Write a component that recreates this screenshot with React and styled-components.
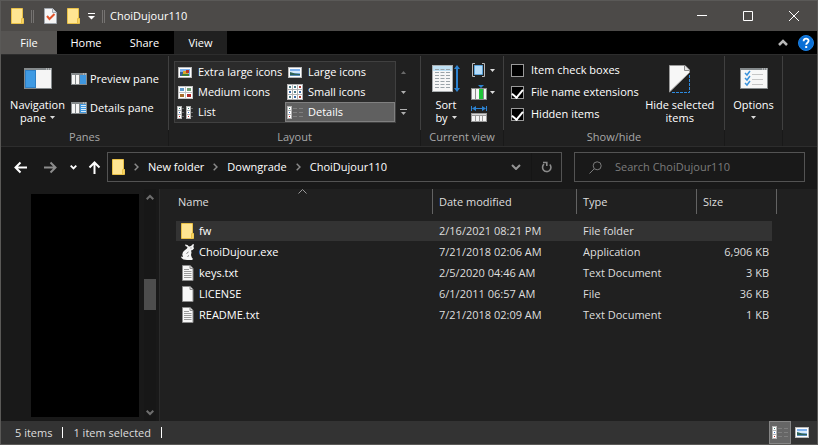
import React from 'react';
import styled, { createGlobalStyle, css } from 'styled-components';

const columns = ['Name', 'Date modified', 'Type', 'Size'];

const files = [
    { icon: 'folder', name: 'fw', date: '2/16/2021 08:21 PM', type: 'File folder', size: '', selected: true },
    { icon: 'mouse', name: 'ChoiDujour.exe', date: '7/21/2018 02:06 AM', type: 'Application', size: '6,906 KB' },
    { icon: 'text', name: 'keys.txt', date: '2/5/2020 04:46 AM', type: 'Text Document', size: '3 KB' },
    { icon: 'blank', name: 'LICENSE', date: '6/1/2011 06:57 AM', type: 'File', size: '36 KB' },
    { icon: 'text', name: 'README.txt', date: '7/21/2018 02:09 AM', type: 'Text Document', size: '1 KB' },
];

const path = ['New folder', 'Downgrade', 'ChoiDujour110'];

/* ---------- icons ---------- */

const Svg = ({ w, h, children }) => (
    <svg width={w} height={h} viewBox={`0 0 ${w} ${h}`} fill="none" aria-hidden="true">{children}</svg>
);

const FolderIcon = () => (
    <Svg w={13} h={16}>
        <path d="M.5 .5h11v10h1v5h-12z" fill="#ffe592" stroke="#e9c148" />
        <path d="M10.500 15v-4.500h2" stroke="#e9c148" />
        <path d="M11 11h1.500v4h-1.500z" fill="#f8d462" />
    </Svg>
);

const CheckedPageIcon = () => (
    <Svg w={13} h={16}>
        <path d="M.5 .5h8l4 4v11h-12z" fill="#f6f6f6" stroke="#a3a9b0" />
        <path d="M8.500 .5v4h4" fill="#dde2e8" stroke="#a3a9b0" />
        <path d="M3 8l2.500 3 5-5" stroke="#e0532a" strokeWidth="2" />
    </Svg>
);

const PageIcon = ({ lines }) => (
    <Svg w={13} h={16}>
        <path d="M1.500 .5h7.500l3 3v12h-10.500z" fill="#f7f7f7" stroke="#8d8d8d" />
        <path d="M9 .5v3h3" fill="#ddd" stroke="#8d8d8d" />
        {lines && <path d="M3 4.500h5M3 6.500h7.500M3 8.500h7.500M3 10.500h7.500M3 12.500h7.500" stroke="#9a9a9a" />}
    </Svg>
);

const MouseIcon = () => (
    <Svg w={13} h={16}>
        <path d="M4 0.500l2.500 .5 1.500 1.500L10 2l2-2 1 .5-.6 2.200L13 4.500 11.500 6 10 6.500l.5 2L10 11l.8 2.500L12 15l-1 1H6l-3.500-.5L.5 14 0 12.500 2 13l-.7-2.500L2 8 4 6l2-1.500L6.500 3 4.500 2z" fill="#f4f4f4" />
        <path d="M9.500 4h1M7.500 8l-2 1.500M6.500 12.500l1.500-1" stroke="#777" />
    </Svg>
);

const fileIcons = {
    folder: <FolderIcon />,
    mouse: <MouseIcon />,
    text: <PageIcon lines />,
    blank: <PageIcon />,
};

const NavPaneIcon = () => (
    <Svg w={28} h={21}>
        <path fill="#858a8c" d="M0 0h28v21H0z" />
        <path fill="#f5f5f5" d="M1 2h26v18H1z" />
        <path fill="#2f7fc4" d="M1 2h11v18H1z" />
        <path fill="#3f9ae3" d="M2 3h9v16H2z" />
        <path d="M22 1h1m1 0h1m1 0h1" stroke="#ddd" />
    </Svg>
);

const PaneIcon = ({ details }) => (
    <Svg w={16} h={12}>
        <path fill="#858a8c" d="M0 0h16v12H0z" />
        <path fill="#f5f5f5" d="M1 2h3v9H1zM5 2h3v9H5z" />
        <path fill="#3f97df" d="M9 2h6v9H9z" />
        <path d="M12 1h1m1 0h1" stroke="#ddd" />
        {details && <path d="M10 3.500h5M10 5.500h5M10 7.500h5M10 9.500h5" stroke="#d9ecfb" />}
    </Svg>
);

const PictureIcon = ({ colorful }) => (
    <Svg w={14} h={11}>
        <path fill="#b8b8b8" d="M0 0h14v11H0z" />
        <path fill="#fff" d="M1 1h12v9H1z" />
        <path fill="#7fb2ee" d="M2 2h10v7H2z" />
        {colorful ? (
            <>
                <path fill="#355f9c" d="M2 5h4v4H2z" />
                <path fill="#d9a82c" d="M5 4h5v4H5z" />
                <path fill="#b8342a" d="M8 3h3v3H8z" />
                <path fill="#3f7d3c" d="M4 7h7v2H4z" />
            </>
        ) : (
            <>
                <path fill="#d7e9fa" d="M2 4h10v2H2z" />
                <path fill="#2f6357" d="M2 5l5 1.500 5 .5v1H2z" />
                <path fill="#5a8bb8" d="M2 8h10v1H2z" />
            </>
        )}
    </Svg>
);

const MediumIcon = () => (
    <Svg w={15} h={13}>
        <path fill="#c4c4c4" d="M0 0h15v13H0z" />
        <path fill="#fff" d="M1 1h6v5H1zM8 1h6v5H8zM1 7h6v5H1zM8 7h6v5H8z" />
        <path fill="#5e98c9" d="M2 2h4v3H2z" />
        <path fill="#6f9e73" d="M9 2h4v3H9z" />
        <path fill="#a86d2b" d="M2 8h4v3H2z" />
        <path fill="#b02a2a" d="M9 8h4v3H9z" />
    </Svg>
);

const SmallIcon = () => (
    <Svg w={16} h={16}>
        <path fill="#b4b4b4" d="M0 0h16v16H0z" />
        <path fill="#fff" d="M1 1h4v4H1zM6 1h4v4H6zM11 1h4v4h-4zM1 6h4v4H1zM6 6h4v4H6zM11 6h4v4h-4zM1 11h4v4H1zM6 11h4v4H6zM11 11h4v4h-4z" />
        <path fill="#4a7a86" d="M2 2h2v2H2zM7 2h2v2H7zM7 7h2v2H7zM2 12h2v2H2z" />
        <path fill="#a53a34" d="M12 2h2v2h-2zM12 12h2v2h-2z" />
        <path fill="#3b6aa5" d="M2 7h2v2H2zM12 7h2v2h-2zM7 12h2v2H7z" />
    </Svg>
);

const Strip = ({ x }) => (
    <g transform={`translate(${x} 0)`}>
        <path fill="#b4b4b4" d="M0 0h5v13H0z" />
        <path fill="#fff" d="M1 1h3v3H1zM1 5h3v3H1zM1 9h3v3H1z" />
        <path fill="#3a7c6f" d="M2 2h1v1H2z" />
        <path fill="#3f74c4" d="M2 6h1v1H2z" />
        <path fill="#c22626" d="M2 10h1v1H2z" />
    </g>
);

const ListIcon = () => (
    <Svg w={16} h={13}>
        <Strip x={0} />
        <Strip x={9} />
        <path d="M5 2.500h2M5 6.500h2M5 10.500h2M14 2.500h2M14 6.500h2M14 10.500h2" stroke="#6b6b6b" />
    </Svg>
);

const DetailsIcon = () => (
    <Svg w={16} h={13}>
        <Strip x={0} />
        <path d="M6 2.500h4M12 2.500h4M6 6.500h4M12 6.500h4M6 10.500h4M12 10.500h4" stroke="#7f7f7f" />
    </Svg>
);

const SortIcon = () => (
    <Svg w={28} h={27}>
        <path fill="#a9adaf" d="M0 0h21v27H0z" />
        <path fill="#f6f6f6" d="M1 1h19v25H1z" />
        <path fill="#bfe0f3" d="M1 1h19v5H1z" />
        <path d="M3 4.500h15M3 7.500h15M3 10.500h15M3 13.500h15M3 16.500h15M3 19.500h15M3 22.500h15" stroke="#9aa3a8" strokeDasharray="4 1.500" />
        <path d="M25 2v23" stroke="#2d83d1" strokeWidth="2" />
        <path d="M25 0l3 4h-6zM25 27l3-4h-6z" fill="#2d83d1" />
    </Svg>
);

const GroupByIcon = () => (
    <Svg w={16} h={14}>
        <path d="M4 .5H1.500v13H4M11 .5h2.500v13H11" stroke="#b9b9b9" />
        <path fill="#b6dcf8" stroke="#5da6dd" d="M3.500 2.500h8v9h-8z" />
    </Svg>
);

const AddColumnsIcon = () => (
    <Svg w={16} h={15}>
        <path d="M7 0h6l-3 3z" fill="#2d83d1" />
        <path fill="#8c8c8c" d="M0 3h16v12H0z" />
        <path fill="#f5f5f5" d="M1 4h3v10H1zM5 4h3v10H5zM13 4h2v10h-2z" />
        <path fill="#20c43a" d="M8 4h4v10H8z" />
    </Svg>
);

const SizeColumnsIcon = () => (
    <Svg w={16} h={16}>
        <path d="M.5 0v5M15.500 0v5M2 2.500h12" stroke="#2d83d1" />
        <path d="M5 0v5L1 2.500zM11 0v5l4-2.500z" fill="#2d83d1" />
        <path fill="#9a9a9a" d="M0 7h16v9H0z" />
        <path fill="#d8d8d8" d="M1 8h14v1H1z" />
        <path fill="#f5f5f5" d="M1 10h3v5H1zM5 10h3v5H5zM9 10h2v5H9zM12 10h3v5h-3z" />
    </Svg>
);

const HideIcon = () => (
    <Svg w={21} h={28}>
        <path d="M.5 27V.5H16L20.500 5v2.500z" fill="#f7f7f7" stroke="#9b9b9b" />
        <path d="M15.500 .5v5h5" fill="#e6e6e6" stroke="#8b8b8b" />
        <path d="M20.500 10v17.500H3" stroke="#2d8be0" strokeDasharray="3 1" />
    </Svg>
);

const OptionsIcon = () => (
    <Svg w={28} h={21}>
        <path fill="#858a8c" d="M0 0h28v21H0z" />
        <path fill="#f7f7f7" d="M1 2h26v18H1z" />
        <path d="M22 1h1m1 0h1m1 0h1" stroke="#ddd" />
        <path d="M12 6.500h11M12 11.500h11M12 16.500h11" stroke="#c6c6c6" />
        <path d="M5 5l2 2 3-4M5 10l2 2 3-4M5 15l2 2 3-4" stroke="#3a93dd" strokeWidth="1.500" />
    </Svg>
);

const Caret = () => (
    <Svg w={5} h={3}><path d="M0 0h5L2.500 3z" fill="#dcdcdc" /></Svg>
);

const Chevron = () => (
    <Svg w={5} h={8}><path d="M.7 .7L4 4 .7 7.300" stroke="#8a8a8a" strokeWidth="1.500" /></Svg>
);

const ArrowIcon = ({ turn = 0, color = '#fff' }) => (
    <Svg w={13} h={13}>
        <path transform={`rotate(${turn} 6.500 6.500)`} d="M13 6.500H1.500M6.500 1.500l-5 5 5 5" stroke={color} strokeWidth="2" />
    </Svg>
);

/* ---------- styles ---------- */

const GlobalStyle = createGlobalStyle`
    * {
        box-sizing: border-box;
    }

    body {
        margin: 0;
        background: #202020;
        color: #fff;
        font: 11px/16px 'Open Sans', 'Noto Sans', sans-serif;
    }

    button,
    input {
        margin: 0;
        padding: 0;
        border: 0;
        background: none;
        color: inherit;
        font: inherit;
    }

    svg {
        display: block;
        flex-shrink: 0;
    }
`;

const Window = styled.div`
    display: flex;
    flex-direction: column;
    min-height: 100vh;
    border: 1px solid #5a5957;
    background: #191919;
`;

const TitleBar = styled.header`
    display: flex;
    align-items: center;
    height: 30px;
    padding-left: 10px;
    background: #4c4a48;
`;

const QuickAccess = styled.div`
    display: flex;
    align-items: center;
    gap: 7px;
`;

const Grip = styled.span`
    width: 3px;
    height: 13px;
    border: solid #757371;
    border-width: 0 1px;
`;

const QuickButton = styled.button`
    display: flex;
    justify-content: center;
    width: ${props => props.$width}px;
`;

const Title = styled.h1`
    flex: 1;
    margin: 0 0 0 5px;
    font-size: 11px;
    font-weight: 400;
`;

const CaptionButton = styled.button`
    display: flex;
    align-items: center;
    justify-content: center;
    width: 46px;
    height: 30px;
`;

const Tabs = styled.nav`
    display: flex;
    align-items: center;
    height: 23px;
    background: #000;
`;

const tabKinds = {
    file: css`
        background: #565452;
    `,
    active: css`
        background: #202020;
    `,
};

const Tab = styled.button`
    width: ${props => props.$width}px;
    height: 23px;
    ${props => tabKinds[props.$kind]}
`;

const TabTools = styled.div`
    display: flex;
    align-items: center;
    gap: 10px;
    margin-left: auto;
    padding-right: 3px;
`;

const Ribbon = styled.section`
    display: flex;
    height: 93px;
    border: solid #2d2d2d;
    border-width: 1px 0;
    background: #202020;
`;

const Group = styled.div`
    display: flex;
    flex-direction: column;
    width: ${props => props.$width}px;
    border-right: 1px solid #404040;
    border-image: linear-gradient(#202020 2px, #404040 2px, #404040 74px, #191919 74px) 1;
    border-width: 0 1px 0 0;
`;

const GroupBody = styled.div`
    display: flex;
    height: 74px;
    padding: 0 ${props => props.$pad || 4}px;
`;

const GroupLabel = styled.div`
    color: #a8a8a8;
    text-align: center;
`;

const BigButton = styled.button`
    display: flex;
    flex-direction: column;
    flex-shrink: 0;
    align-items: center;
    width: ${props => props.$width}px;
    padding-top: 8px;
    line-height: 13px;
    white-space: nowrap;
`;

const BigIcon = styled.span`
    display: flex;
    align-items: center;
    height: 31px;
    margin-bottom: 4px;
`;

const ButtonLine = styled.span`
    display: flex;
    align-items: center;
    gap: 4px;
    min-height: 13px;
`;

const Stack = styled.div`
    display: flex;
    flex-direction: column;
    margin-left: ${props => props.$gap || 0}px;
    padding-top: ${props => props.$top}px;
`;

const SmallButton = styled.button`
    display: flex;
    align-items: center;
    gap: 3px;
    height: ${props => props.$height}px;
    white-space: nowrap;
`;

const Gallery = styled.div`
    display: grid;
    grid-template-columns: 110px 110px;
    grid-auto-rows: 20px;
    align-self: flex-start;
    margin-top: 6px;
    border: 1px solid #404040;
    background: #2b2b2b;
`;

const GalleryItem = styled.button`
    display: flex;
    align-items: center;
    padding-left: 1px;
    border: 1px solid transparent;
    white-space: nowrap;
    ${props => props.$selected && css`
        border-color: #808080;
        background: #606060;
    `}
`;

const GalleryIcon = styled.span`
    display: flex;
    justify-content: center;
    width: 16px;
    margin-right: 5px;
`;

const GalleryScroll = styled.div`
    display: flex;
    flex-direction: column;
    width: 14px;
    padding-top: 7px;
`;

const ScrollStep = styled.button`
    display: flex;
    align-items: center;
    justify-content: center;
    height: 20px;
`;

const CheckRow = styled.label`
    display: flex;
    align-items: center;
    gap: 7px;
    height: 22px;
    white-space: nowrap;
`;

const CheckBox = styled.input`
    display: flex;
    justify-content: center;
    appearance: none;
    width: 13px;
    height: 13px;
    border: 1px solid #9a9a9a;
    background: #000;

    &:checked::after {
        width: 5px;
        height: 9px;
        border: solid #fff;
        border-width: 0 2px 2px 0;
        transform: rotate(40deg);
        content: '';
    }
`;

const AddressRow = styled.div`
    display: flex;
    align-items: center;
    padding: 5px 12px 7px 4px;
`;

const Arrows = styled.div`
    display: flex;
    align-items: center;
`;

const ArrowButton = styled.button`
    display: flex;
    justify-content: center;
    width: ${props => props.$width}px;
`;

const AddressBar = styled.div`
    display: flex;
    flex: 1;
    align-items: center;
    height: 30px;
    padding-left: 4px;
    border: 1px solid #535353;
`;

const Crumb = styled.button`
    display: flex;
    align-items: center;
    gap: 9px;
    margin-left: 9px;
    white-space: nowrap;
`;

const AddressTools = styled.div`
    display: flex;
    height: 28px;
    margin-left: auto;
`;

const AddressTool = styled.button`
    display: flex;
    align-items: center;
    justify-content: center;
    width: 30px;

    & + & {
        border-left: 1px solid #151515;
    }
`;

const SearchBox = styled.label`
    display: flex;
    align-items: center;
    gap: 13px;
    width: 231px;
    height: 30px;
    margin-left: 12px;
    padding: 0 14px;
    border: 1px solid #535353;
`;

const SearchInput = styled.input`
    flex: 1;
    min-width: 0;
    outline: none;

    &::placeholder {
        color: #7c7c7c;
        opacity: 1;
    }
`;

const Body = styled.main`
    display: flex;
    flex: 1;
`;

const Sidebar = styled.aside`
    display: flex;
    width: 159px;
    padding-left: 30px;
    border-right: 1px solid #2b2b2b;
`;

const TreePanel = styled.div`
    width: 108px;
    margin: 5px 5px 4px 0;
    background: #000;
`;

const ScrollBar = styled.div`
    display: flex;
    flex-direction: column;
    align-items: center;
    width: 12px;
    padding: 5px 0;
    background: #171717;
`;

const Thumb = styled.div`
    width: 12px;
    height: 31px;
    margin: 79px 0 auto;
    background: #4d4d4d;
`;

const FilePane = styled.section`
    flex: 1;
    padding-left: 16px;
    background: #202020;
`;

const FileTable = styled.table`
    width: 601px;
    border-collapse: separate;
    border-spacing: 0;
    table-layout: fixed;

    tbody::before {
        display: block;
        height: 7px;
        content: '';
    }
`;

const HeadCell = styled.th`
    position: relative;
    height: 25px;
    padding: 0 0 0 ${props => props.$first ? 2 : 6}px;
    border-right: 1px solid #636363;
    color: #dedede;
    font-weight: 400;
    text-align: left;
`;

const SortMark = styled.span`
    position: absolute;
    top: 0;
    left: 50%;
    margin-left: -6px;
`;

const Cell = styled.td`
    height: 21px;
    padding: 0 3px 0 6px;
    border-bottom: 1px solid transparent;
    background: ${props => props.$selected ? '#333' : 'none'};
    background-clip: padding-box;
    color: #dedede;
    text-align: ${props => props.$right ? 'right' : 'left'};
    white-space: nowrap;
`;

const FileName = styled.span`
    display: flex;
    align-items: center;
    gap: 5px;
    margin-left: -1px;
    color: #fff;
`;

const StatusBar = styled.footer`
    display: flex;
    align-items: center;
    gap: 10px;
    height: 23px;
    padding-left: 14px;
    background: #333;
    color: #dedede;
`;

const StatusLine = styled.span`
    width: 1px;
    height: 11px;
    background: #fff;
`;

const ViewModes = styled.div`
    display: flex;
    margin-left: auto;
    padding-right: 4px;
`;

const ViewMode = styled.button`
    display: flex;
    align-items: center;
    justify-content: center;
    width: 22px;
    height: 23px;
    ${props => props.$selected && css`
        border: 1px solid #868686;
        background: #666;
    `}
`;

/* ---------- parts ---------- */

const LargeCommand = ({ width, icon, first, second, caret }) => (
    <BigButton $width={width}>
        <BigIcon>{icon}</BigIcon>
        <ButtonLine>{first}</ButtonLine>
        <ButtonLine>{second}{caret && <Caret />}</ButtonLine>
    </BigButton>
);

const Check = ({ label, checked }) => (
    <CheckRow>
        <CheckBox type="checkbox" defaultChecked={checked} />
        {label}
    </CheckRow>
);

const GalleryEntry = ({ icon, label, selected }) => (
    <GalleryItem $selected={selected} aria-pressed={!!selected}>
        <GalleryIcon>{icon}</GalleryIcon>
        {label}
    </GalleryItem>
);

const WindowTitle = () => (
    <TitleBar>
        <QuickAccess>
            <FolderIcon />
            <Grip />
            <QuickButton $width={19} aria-label="Properties"><CheckedPageIcon /></QuickButton>
            <QuickButton $width={13} aria-label="New folder"><FolderIcon /></QuickButton>
            <QuickButton $width={8} aria-label="Customize">
                <Svg w={7} h={7}><path d="M0 .5h7" stroke="#fff" /><path d="M0 3h7L3.500 6.500z" fill="#fff" /></Svg>
            </QuickButton>
            <Grip />
        </QuickAccess>
        <Title>ChoiDujour110</Title>
        <CaptionButton aria-label="Minimize">
            <Svg w={10} h={10}><path d="M0 4.500h10" stroke="#fff" /></Svg>
        </CaptionButton>
        <CaptionButton aria-label="Maximize">
            <Svg w={10} h={10}><path d="M.5 .5h9v9h-9z" stroke="#fff" /></Svg>
        </CaptionButton>
        <CaptionButton aria-label="Close">
            <Svg w={10} h={10}><path d="M0 0l10 10M10 0L0 10" stroke="#fff" /></Svg>
        </CaptionButton>
    </TitleBar>
);

const RibbonTabs = () => (
    <Tabs>
        <Tab $width={56} $kind="file">File</Tab>
        <Tab $width={58}>Home</Tab>
        <Tab $width={59}>Share</Tab>
        <Tab $width={53} $kind="active">View</Tab>
        <TabTools>
            <button aria-label="Collapse ribbon">
                <Svg w={10} h={7}><path d="M1 6l4-4 4 4" stroke="#b9b9b9" strokeWidth="2.500" /></Svg>
            </button>
            <button aria-label="Help">
                <Svg w={16} h={16}>
                    <circle cx="8" cy="8" r="7.500" fill="#0a6fd6" stroke="#1b7fe0" />
                    <path d="M5.600 6.200c0-3.400 5-3.200 5-.4 0 1.900-2.400 1.900-2.400 4" stroke="#fff" strokeWidth="1.800" />
                    <path d="M7.200 11h2v2h-2z" fill="#fff" />
                </Svg>
            </button>
        </TabTools>
    </Tabs>
);

const ViewRibbon = () => (
    <Ribbon>
        <Group $width={168}>
            <GroupBody $pad={3}>
                <LargeCommand width={67} icon={<NavPaneIcon />} first="Navigation" second="pane" caret />
                <Stack $top={9}>
                    <SmallButton $height={29}><PaneIcon />Preview pane</SmallButton>
                    <SmallButton $height={29}><PaneIcon details />Details pane</SmallButton>
                </Stack>
            </GroupBody>
            <GroupLabel>Panes</GroupLabel>
        </Group>
        <Group $width={252}>
            <GroupBody $pad={5}>
                <Gallery>
                    <GalleryEntry icon={<PictureIcon colorful />} label="Extra large icons" />
                    <GalleryEntry icon={<PictureIcon />} label="Large icons" />
                    <GalleryEntry icon={<MediumIcon />} label="Medium icons" />
                    <GalleryEntry icon={<SmallIcon />} label="Small icons" />
                    <GalleryEntry icon={<ListIcon />} label="List" />
                    <GalleryEntry icon={<DetailsIcon />} label="Details" selected />
                </Gallery>
                <GalleryScroll>
                    <ScrollStep aria-label="Previous row">
                        <Svg w={5} h={3}><path d="M0 3h5L2.500 0z" fill="#6a6a6a" /></Svg>
                    </ScrollStep>
                    <ScrollStep aria-label="Next row">
                        <Svg w={5} h={3}><path d="M0 0h5L2.500 3z" fill="#b0b0b0" /></Svg>
                    </ScrollStep>
                    <ScrollStep aria-label="More">
                        <Svg w={7} h={6}><path d="M0 .5h7" stroke="#b0b0b0" /><path d="M1 3h5L3.500 6z" fill="#b0b0b0" /></Svg>
                    </ScrollStep>
                </GalleryScroll>
            </GroupBody>
            <GroupLabel>Layout</GroupLabel>
        </Group>
        <Group $width={83}>
            <GroupBody>
                <LargeCommand width={42} icon={<SortIcon />} first="Sort" second="by" caret />
                <Stack $top={4} $gap={4}>
                    <SmallButton $height={22} aria-label="Group by"><GroupByIcon /><Caret /></SmallButton>
                    <SmallButton $height={22} aria-label="Add columns"><AddColumnsIcon /><Caret /></SmallButton>
                    <SmallButton $height={22} aria-label="Size all columns to fit"><SizeColumnsIcon /></SmallButton>
                </Stack>
            </GroupBody>
            <GroupLabel>Current view</GroupLabel>
        </Group>
        <Group $width={221}>
            <GroupBody $pad={7}>
                <Stack $top={4}>
                    <Check label="Item check boxes" />
                    <Check label="File name extensions" checked />
                    <Check label="Hidden items" checked />
                </Stack>
                <LargeCommand width={82} icon={<HideIcon />} first="Hide selected" second="items" />
            </GroupBody>
            <GroupLabel>Show/hide</GroupLabel>
        </Group>
        <Group $width={58}>
            <GroupBody $pad={2}>
                <LargeCommand width={53} icon={<OptionsIcon />} first="Options" caret />
            </GroupBody>
        </Group>
    </Ribbon>
);

const Address = () => (
    <AddressRow>
        <Arrows>
            <ArrowButton $width={30} aria-label="Back"><ArrowIcon /></ArrowButton>
            <ArrowButton $width={30} aria-label="Forward"><ArrowIcon turn={180} color="#8c8c8c" /></ArrowButton>
            <ArrowButton $width={16} aria-label="Recent locations">
                <Svg w={7} h={5}><path d="M.7 .7l2.800 2.800L6.300 .7" stroke="#fff" strokeWidth="1.800" /></Svg>
            </ArrowButton>
            <ArrowButton $width={26} aria-label="Up"><ArrowIcon turn={90} /></ArrowButton>
        </Arrows>
        <AddressBar>
            <FolderIcon />
            {path.map(name => (
                <Crumb key={name}><Chevron />{name}</Crumb>
            ))}
            <AddressTools>
                <AddressTool aria-label="Previous locations">
                    <Svg w={10} h={6}><path d="M1 1l4 4 4-4" stroke="#959595" strokeWidth="2" /></Svg>
                </AddressTool>
                <AddressTool aria-label="Refresh">
                    <Svg w={11} h={12}>
                        <path d="M8.800 3.500A4.200 4.200 0 1 1 3 3.200" stroke="#8a8a8a" strokeWidth="1.600" />
                        <path d="M2 1.500h3.800v3.500" stroke="#8a8a8a" strokeWidth="1.600" />
                    </Svg>
                </AddressTool>
            </AddressTools>
        </AddressBar>
        <SearchBox>
            <Svg w={13} h={13}>
                <circle cx="8.200" cy="4.800" r="4" stroke="#7c7c7c" />
                <path d="M5.200 7.800L.5 12.500" stroke="#7c7c7c" />
            </Svg>
            <SearchInput type="text" aria-label="Search" placeholder="Search ChoiDujour110" />
        </SearchBox>
    </AddressRow>
);

const FileList = () => (
    <FileTable>
        <colgroup>
            <col width="257" />
            <col width="144" />
            <col width="120" />
            <col width="75" />
            <col width="5" />
        </colgroup>
        <thead>
            <tr>
                {columns.map((name, index) => (
                    <HeadCell key={name} $first={index === 0} colSpan={index === 3 ? 2 : 1}>
                        {name}
                        {index === 0 && (
                            <SortMark>
                                <Svg w={9} h={5}><path d="M.5 4.500l4-4 4 4" stroke="#9a9a9a" /></Svg>
                            </SortMark>
                        )}
                    </HeadCell>
                ))}
            </tr>
        </thead>
        <tbody>
            {files.map(file => (
                <tr key={file.name}>
                    <Cell $selected={file.selected}>
                        <FileName>{fileIcons[file.icon]}{file.name}</FileName>
                    </Cell>
                    <Cell $selected={file.selected}>{file.date}</Cell>
                    <Cell $selected={file.selected}>{file.type}</Cell>
                    <Cell $selected={file.selected} $right>{file.size}</Cell>
                </tr>
            ))}
        </tbody>
    </FileTable>
);

const App = () => (
    <>
        <GlobalStyle />
        <Window>
            <WindowTitle />
            <RibbonTabs />
            <ViewRibbon />
            <Address />
            <Body>
                <Sidebar>
                    <TreePanel />
                    <ScrollBar>
                        <Svg w={8} h={6}><path d="M.7 5.300L4 2l3.300 3.300" stroke="#6e6e6e" strokeWidth="2" /></Svg>
                        <Thumb />
                        <Svg w={8} h={6}><path d="M.7 .7L4 4 7.300 .7" stroke="#6e6e6e" strokeWidth="2" /></Svg>
                    </ScrollBar>
                </Sidebar>
                <FilePane>
                    <FileList />
                </FilePane>
            </Body>
            <StatusBar>
                <span>5 items</span>
                <StatusLine />
                <span>1 item selected</span>
                <StatusLine />
                <ViewModes>
                    <ViewMode $selected aria-label="Details view"><DetailsIcon /></ViewMode>
                    <ViewMode aria-label="Large icons view"><PictureIcon /></ViewMode>
                </ViewModes>
            </StatusBar>
        </Window>
    </>
);

export default App;
